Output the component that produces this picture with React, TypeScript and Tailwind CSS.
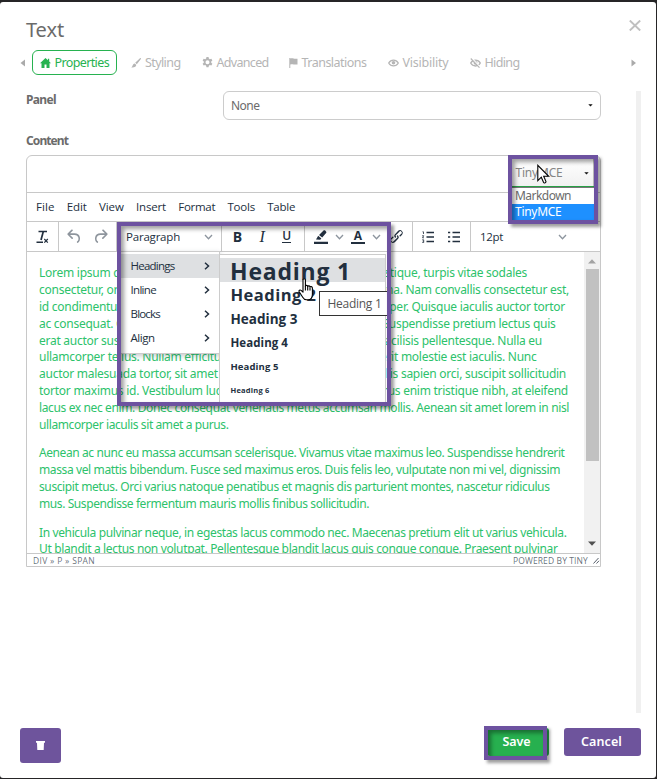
import { useLayoutEffect, useRef, type ReactNode } from "react";

/** A single-line label whose tracking is adjusted so that it spans `w` pixels. */
function Label({ w, className = "", children }: { w: number; className?: string; children: string }) {
  const ref = useRef<HTMLSpanElement>(null);
  useLayoutEffect(() => {
    const el = ref.current;
    if (!el) return;
    el.style.letterSpacing = "0px";
    const natural = el.getBoundingClientRect().width;
    el.style.letterSpacing = `${(w - natural) / children.length}px`;
  }, [w, children]);
  return (
    <span ref={ref} className={`inline-block whitespace-pre ${className}`}>
      {children}
    </span>
  );
}

type Line = { w: number; text: string } | { w: number; left: string; right: string };

const paragraphs: Line[][] = [
  [
    { w: 488, left: "Lorem ipsum dolor sit", right: "tristique, turpis vitae sodales" },
    { w: 530, left: "consectetur, orci id", right: "urna. Nam convallis consectetur est," },
    { w: 526, left: "id condimentum", right: "semper. Quisque iaculis auctor tortor" },
    { w: 516.5, left: "ac consequat. Cras", right: "Suspendisse pretium lectus quis" },
    { w: 503, left: "erat auctor suscipit", right: "facilisis pellentesque. Nulla eu" },
    { w: 497.5, left: "ullamcorper tellus. Nullam efficitur", right: "hendrerit molestie est iaculis. Nunc" },
    { w: 527, left: "auctor malesuada tortor, sit amet mi", right: "mollis sapien orci, suscipit sollicitudin" },
    { w: 529, left: "tortor maximus id. Vestibulum luctus", right: "purus enim tristique nibh, at eleifend" },
    { w: 530, text: "lacus ex nec enim. Donec consequat venenatis metus accumsan mollis. Aenean sit amet lorem in nisl" },
    { w: 189.5, text: "ullamcorper iaculis sit amet a purus." },
  ],
  [
    { w: 525.5, text: "Aenean ac nunc eu massa accumsan scelerisque. Vivamus vitae maximus leo. Suspendisse hendrerit" },
    { w: 521, text: "massa vel mattis bibendum. Fusce sed maximus eros. Duis felis leo, vulputate non mi vel, dignissim" },
    { w: 510.5, text: "suscipit metus. Orci varius natoque penatibus et magnis dis parturient montes, nascetur ridiculus" },
    { w: 330, text: "mus. Suspendisse fermentum mauris mollis finibus sollicitudin." },
  ],
  [
    { w: 527.5, text: "In vehicula pulvinar neque, in egestas lacus commodo nec. Maecenas pretium elit ut varius vehicula." },
    { w: 518.5, text: "Ut blandit a lectus non volutpat. Pellentesque blandit lacus quis congue congue. Praesent pulvinar" },
  ],
];

function TextLine({ line }: { line: Line }) {
  if ("text" in line) {
    return (
      <div className="h-[16.8px]">
        <Label w={line.w}>{line.text}</Label>
      </div>
    );
  }
  return (
    <div className="flex h-[16.8px] justify-between whitespace-pre tracking-[-0.26px]" style={{ width: line.w }}>
      <span>{line.left}</span>
      <span>{line.right}</span>
    </div>
  );
}

function Tab({ ml, w, gap, icon, children }: { ml: string; w: number; gap: string; icon: ReactNode; children: string }) {
  return (
    <div className={`flex items-center ${ml} ${gap}`}>
      {icon}
      <Label w={w}>{children}</Label>
    </div>
  );
}

function Chevron({ className = "" }: { className?: string }) {
  return (
    <svg className={className} width="9" height="6" viewBox="0 0 9 6" fill="none" stroke="#8d959e" strokeWidth="1.3">
      <path d="M1 1l3.5 3.8L8 1" />
    </svg>
  );
}

function Undo({ flip = false }: { flip?: boolean }) {
  return (
    <svg width="19" height="19" viewBox="0 0 24 24" fill="#8e959d" className={flip ? "-scale-x-100" : ""}>
      <path d="M6.4 8H12c3.7 0 6.2 2 6.8 5.1.6 2.7-.4 5.6-2.3 6.8a1 1 0 01-1-1.8c1.1-.6 1.8-2.7 1.4-4.6-.5-2.1-2.1-3.5-4.9-3.5H6.4l3.3 3.3a1 1 0 11-1.4 1.4l-5-5a1 1 0 010-1.4l5-5a1 1 0 011.4 1.4L6.4 8z" />
    </svg>
  );
}

function MenuRow({ w, active = false, children }: { w: number; active?: boolean; children: string }) {
  return (
    <div className={`flex h-6 items-center justify-between pr-[9px] pl-[9.500px] ${active ? "bg-[#dee0e2]" : ""}`}>
      <Label w={w}>{children}</Label>
      <svg width="6" height="10" viewBox="0 0 6 10" fill="none" stroke="#222f3e" strokeWidth="1.5">
        <path d="M1 1.8L4.5 5 1 8.2" />
      </svg>
    </div>
  );
}

const frame =
  "absolute border-4 border-[#6d52a0] shadow-[3px_3px_3px_rgba(0,0,0,0.38),inset_3px_3px_4px_rgba(0,0,0,0.38)]";

export default function App() {
  return (
    <div className="relative h-[779px] w-[657px] overflow-hidden bg-[#262527] pt-0.5 pr-px pb-px font-['Noto_Sans','Open_Sans',sans-serif] text-[12px] text-[#6b6b6b]">
      <div className="flex h-full flex-col rounded-[3px] bg-white">
        {/* Title */}
        <header className="flex h-12 items-start justify-between pr-[15px] pl-[26px]">
          <h1 className="pt-[14px] text-[20px] leading-[28px]">
            <Label w={38}>Text</Label>
          </h1>
          <svg className="mt-[18px]" width="12" height="11" viewBox="0 0 12 11" stroke="#c0c0c0" strokeWidth="1.9">
            <path d="M.8.5l10.4 10M11.2.5L.8 10.5" />
          </svg>
        </header>

        {/* Tabs */}
        <nav className="flex h-[25px] items-center pl-5 text-[12.5px] leading-[20px] text-[#b5b5b5]">
          <svg width="5" height="8" viewBox="0 0 5 8" fill="#aaa"><path d="M5 .5v7L.5 4z" /></svg>
          <div className="ml-[7px] flex h-[25px] w-[85px] items-center gap-[3.5px] rounded-md border border-[#27b250] pl-[7px] text-[#27b250]">
            <svg width="11" height="10" viewBox="0 0 11 10" fill="currentColor">
              <path d="M5.5 0L0 5.2h1.5V10h3V6.5h2V10h3V5.2H11L9.2 3.5V.8H7.9v1.4z" />
            </svg>
            <Label w={54.5}>Properties</Label>
          </div>
          <Tab ml="ml-[14px]" gap="gap-[4px]" w={35.5} icon={
            <svg width="10" height="10" viewBox="0 0 10 10" fill="currentColor">
              <path d="M9.8.2c.3.3.2.7-.1 1.1L5.800 6.200 4.200 4.800 8.700.4c.4-.4.8-.5 1.100-.2zM3.600 5.400l1.600 1.400c.2 1.500-1.400 2.900-4.900 2.600C1.900 8.500 1.400 5.700 3.600 5.400z" />
            </svg>
          }>Styling</Tab>
          <Tab ml="ml-[21px]" gap="gap-[4px]" w={52} icon={
            <svg width="11" height="11" viewBox="0 0 16 16" fill="currentColor">
              <path fillRule="evenodd" d="M6.500 0h3l.5 2.300 1.400.8 2.200-.7 1.500 2.600-1.700 1.600v1.700l1.700 1.600-1.500 2.600-2.200-.7-1.400.8-.5 2.400h-3l-.5-2.400-1.400-.8-2.200.7L.9 9.900l1.700-1.600V6.600L.9 5l1.500-2.600 2.200.7 1.400-.8zM8 4.600a2.900 2.900 0 100 5.800 2.900 2.900 0 000-5.800z" />
            </svg>
          }>Advanced</Tab>
          <Tab ml="ml-[20px]" gap="gap-[4px]" w={65} icon={
            <svg width="9" height="10" viewBox="0 0 9 10" fill="currentColor">
              <path d="M.3 0h1v10h-1zM1.300.6c2.400-.9 3.400.7 7.200.1v5.700c-3.500.8-4.800-1-7.200.1z" />
            </svg>
          }>Translations</Tab>
          <Tab ml="ml-[21px]" gap="gap-[4px]" w={46} icon={
            <svg width="11" height="8" viewBox="0 0 11 8" fill="none" stroke="currentColor">
              <path d="M.7 4C3 .1 8 .1 10.300 4 8 7.900 3 7.900.7 4z" strokeWidth="1.300" />
              <circle cx="5.500" cy="3.800" r="1.800" fill="currentColor" stroke="none" />
            </svg>
          }>Visibility</Tab>
          <Tab ml="ml-[21px]" gap="gap-[4px]" w={35} icon={
            <svg width="11" height="10" viewBox="0 0 11 10" fill="none" stroke="currentColor">
              <path d="M.7 5C3 1.100 8 1.100 10.300 5 8 8.900 3 8.900.7 5z" strokeWidth="1.400" />
              <circle cx="5.500" cy="4.800" r="1.900" fill="currentColor" stroke="none" />
              <path d="M1.800.3L10.300 9.500" stroke="white" strokeWidth="1.500" />
              <path d="M.8.500L9.500 9.700" strokeWidth="1.100" />
            </svg>
          }>Hiding</Tab>
          <svg className="mr-[20px] ml-auto" width="5" height="8" viewBox="0 0 5 8" fill="#aaa"><path d="M.5.500v7L5 4z" /></svg>
        </nav>

        {/* Scrolling form */}
        <div className="mt-4 flex h-[622px] justify-between pr-[15px] pl-[26px]">
          <div className="w-[575px]">
            <div className="flex h-[29px] justify-between">
              <Label w={30} className="leading-[17px] font-bold">Panel</Label>
              <div className="flex h-[29px] w-[378px] items-center justify-between rounded-md border border-[#ccc] pr-[7px] pl-[7px]">
                <Label w={28.5}>None</Label>
                <svg width="5" height="3" viewBox="0 0 5 3" fill="#111"><path d="M.3.300h4.400L2.500 2.500z" /></svg>
              </div>
            </div>
            <div className="mt-3 h-[23px] leading-[17px] font-bold">
              <Label w={42}>Content</Label>
            </div>

            {/* Editor */}
            <div className="h-[412px] overflow-hidden rounded-t-md border border-[#c8c8c8] font-['Open_Sans','Noto_Sans',sans-serif] text-[#222f3e]">
              <div className="h-9" />
              <div className="flex h-[30px] items-center gap-[12.2px] border-t border-b border-[#c8c8c8] pl-[9px] text-[11.500px]">
                <Label w={18.500}>File</Label>
                <Label w={20}>Edit</Label>
                <Label w={25}>View</Label>
                <Label w={30}>Insert</Label>
                <Label w={37}>Format</Label>
                <Label w={27.500}>Tools</Label>
                <Label w={28}>Table</Label>
              </div>
              <div className="flex h-[30px] items-stretch border-b border-[#c8c8c8]">
                <div className="flex w-8 items-center justify-center border-r border-[#c8c8c8] pr-px">
                  <svg width="13" height="14" viewBox="0 0 13 14" fill="none" stroke="#222f3e">
                    <path d="M2.500 1.500H11" strokeWidth="1.700" />
                    <path d="M7.300 1.500L5 10" strokeWidth="1.700" />
                    <path d="M.5 12.300H7" strokeWidth="1.500" />
                    <path d="M8.300 9l3.500 3.600M11.800 9l-3.500 3.600" strokeWidth="1.200" />
                  </svg>
                </div>
                <div className="flex w-[58px] items-center justify-center gap-[7px] border-r border-[#c8c8c8] pr-px">
                  <Undo />
                  <Undo flip />
                </div>
                <div className="flex w-[105px] items-center justify-between border-r border-[#c8c8c8] pr-2 pl-[9px] text-[11.500px]">
                  <Label w={54}>Paragraph</Label>
                  <Chevron />
                </div>
                <div className="flex w-[83px] items-center justify-around border-r border-[#c8c8c8] pr-1 pl-[2px] text-[14px] leading-none">
                  <b>B</b>
                  <i className="font-['Liberation_Serif',serif] text-[16px]">I</i>
                  <span className="h-[13px] border-b-[1.500px] border-[#222f3e] text-[12px] leading-[11px] font-semibold">U</span>
                </div>
                <div className="flex w-[108px] items-center border-r border-[#c8c8c8] pl-[9px]">
                  <svg width="14" height="14" viewBox="0 0 14 14" fill="#222f3e">
                    <path d="M0 11.800h14V14H0zM2 9.500l2.200-3.700 3.200 2.700-1.200 1.300zM5 5L9.300.7c.6-.6 1.300-.6 1.900-.1l.8.800c.5.600.5 1.300-.1 1.900L8.200 7.600z" />
                  </svg>
                  <Chevron className="ml-[7px]" />
                  <span className="ml-[7px] flex h-[14px] w-[14px] justify-center border-b-2 border-[#222f3e] text-[12px] leading-[12px] font-bold">A</span>
                  <Chevron className="ml-[7px]" />
                  <svg className="ml-[7px] h-[17px] w-[17px]" viewBox="0 0 24 24" fill="#222f3e">
                    <path d="M6.200 12.300a1 1 0 011.400 1.400l-2.100 2a2 2 0 102.700 2.800l4.800-4.800a1 1 0 000-1.400 1 1 0 111.400-1.300 2.900 2.900 0 010 4L9.600 20a3.900 3.900 0 01-5.500-5.500l2-2zm11.600-.6a1 1 0 01-1.400-1.400l2-2a2 2 0 10-2.600-2.800L11 10.300a1 1 0 000 1.400A1 1 0 119.600 13a2.900 2.900 0 010-4L14.400 4a3.900 3.900 0 015.500 5.500l-2 2z" />
                  </svg>
                </div>
                <div className="flex w-[58px] items-center gap-[14px] border-r border-[#c8c8c8] pl-[9px]">
                  <svg width="12" height="12" viewBox="0 0 12 12" stroke="#222f3e" fill="none">
                    <path d="M4.500 1.500H12M4.500 6H12M4.500 10.500H12" strokeWidth="1.600" />
                    <path d="M.5.800h1V3M.2 4.700h1.500L.5 6.800h1.500M.2 8.800h1.500v2.800H.2M.7 10.200h1" strokeWidth=".8" />
                  </svg>
                  <svg width="12" height="12" viewBox="0 0 12 12" stroke="#222f3e" fill="none">
                    <path d="M4.500 1.500H12M4.500 6H12M4.500 10.500H12M0 1.500h2.200M0 6h2.200M0 10.500h2.200" strokeWidth="1.600" />
                  </svg>
                </div>
                <div className="flex w-[96px] items-center justify-between pl-[9px] text-[11.500px]">
                  <Label w={23}>12pt</Label>
                  <Chevron />
                </div>
              </div>

              <div className="flex h-[301px] justify-between">
                <div className="flex flex-col gap-3 overflow-hidden pt-[13.400px] pl-3 font-['Noto_Sans','Open_Sans',sans-serif] text-[12px] leading-[16.800px] text-[#2dc26b]">
                  {paragraphs.map((lines, i) => (
                    <div key={i} className="shrink-0">
                      {lines.map((line, j) => (
                        <TextLine key={j} line={line} />
                      ))}
                    </div>
                  ))}
                </div>
                <div className="flex w-4 flex-col items-center bg-[#f1f1f1]">
                  <svg className="mt-[7px]" width="8" height="5" viewBox="0 0 8 5" fill="#a3a3a3"><path d="M0 4.500h8L4 .3z" /></svg>
                  <div className="mt-[5px] h-[192px] w-[13px] bg-[#c1c1c1]" />
                  <svg className="mt-auto mb-[7px]" width="8" height="5" viewBox="0 0 8 5" fill="#505050"><path d="M0 .5h8L4 4.700z" /></svg>
                </div>
              </div>

              <div className="flex h-[13px] items-center border-t border-[#c8c8c8] pt-px pl-[6px] text-[8.500px] leading-[12px] text-[#222f3e]/70">
                <Label w={62}>DIV » P » SPAN</Label>
                <Label w={75} className="ml-auto">POWERED BY TINY</Label>
                <svg className="ml-1" width="8" height="7" viewBox="0 0 8 7" stroke="#59616c" strokeWidth="1"><path d="M1.500 6.500l5-5.500M4.500 6.500L7 3.800" /></svg>
              </div>
            </div>
          </div>
          <div className="w-[5px] bg-[#f0f0f0]" />
        </div>

        {/* Footer */}
        <footer className="mt-[15px] flex items-start pr-[15px] pl-5 text-[12.500px] leading-none font-semibold text-white">
          <div className="flex h-[35px] w-[41px] items-center justify-center rounded-[3px] bg-[#6e549c]">
            <svg width="9" height="9" viewBox="0 0 9 9" fill="white"><path d="M0 0h9v1.700H8L7.700 9H1.300L1 1.700H0z" /></svg>
          </div>
          <div className="ml-auto flex h-7 w-[62px] items-center justify-center rounded-[3px] bg-[#27b04f] pr-[3px]">
            <Label w={28}>Save</Label>
          </div>
          <div className="ml-[15px] flex h-7 w-[77px] items-center justify-center rounded-[3px] bg-[#6e549c] pr-[2px]">
            <Label w={41}>Cancel</Label>
          </div>
        </footer>
      </div>

      {/* Block format menus */}
      <div className="absolute top-[226px] left-[121px] h-[176px] w-[266px] overflow-hidden font-['Open_Sans','Noto_Sans',sans-serif] text-[11.500px] leading-[16px] text-[#222f3e]">
        <div className="absolute top-[25px] left-0 h-[103px] w-[99px] border-t border-r border-b border-[#ccc] bg-white pt-[2px] shadow-[0_2px_5px_rgba(34,47,62,0.25)]">
          <MenuRow w={44} active>Headings</MenuRow>
          <MenuRow w={25.500}>Inline</MenuRow>
          <MenuRow w={29.500}>Blocks</MenuRow>
          <MenuRow w={24}>Align</MenuRow>
        </div>
        <div className="absolute top-[28px] left-[98px] flex h-[170px] w-[167px] flex-col border border-[#ccc] bg-white pt-[3px] font-bold">
          <div className="flex h-6 items-center bg-[#dee0e2] pt-[2px] pl-[10px] text-[23px]"><Label w={121}>Heading 1</Label></div>
          <div className="flex h-6 items-center pt-px pl-[10.500px] text-[16.500px]"><Label w={86}>Heading 2</Label></div>
          <div className="flex h-6 items-center pt-px pl-[10.500px] text-[13.500px]"><Label w={67}>Heading 3</Label></div>
          <div className="flex h-6 items-center pt-px pl-[10.500px] text-[11.500px]"><Label w={57.500}>Heading 4</Label></div>
          <div className="flex h-6 items-center pt-px pl-[10.500px] text-[9.500px]"><Label w={48}>Heading 5</Label></div>
          <div className="flex h-6 items-center pl-[10.500px] text-[7.500px]"><Label w={39}>Heading 6</Label></div>
        </div>
        <div className="absolute top-[65px] left-[198px] flex h-[25px] w-[72px] items-center border border-[#333] bg-white pl-[7.500px] text-[12px] text-[#555]">
          <Label w={54}>Heading 1</Label>
        </div>
        <svg className="absolute top-[52px] left-[177px]" width="17" height="23" viewBox="0 0 17 23" fill="white" stroke="black" strokeWidth="1.100" strokeLinejoin="round">
          <path d="M5 1.700c0-1.300 2.400-1.300 2.400 0v6.500c.1-1.200 2.300-1.100 2.300.3.300-1 2.300-.8 2.300.6.4-.9 2.400-.6 2.400.9v6.200c0 3.500-1.700 5.600-4.400 5.600H8.600c-1.900 0-3-1-3.900-2.600L1.200 13.700c-.7-1.300.8-2.300 1.900-1.300L5 14.200z" />
          <path d="M7.400 8v4.500M9.700 8.500v4M12 9.500v3" fill="none" />
        </svg>
      </div>
      <div className={`${frame} top-[222px] left-[117px] h-[184px] w-[274px]`} />

      {/* Editor type select */}
      <div className="absolute top-[159px] left-[512px] h-[61px] w-[82px] bg-white text-[12px] leading-[16px]">
        <div className="flex h-[27px] items-center justify-between border-r border-[#bbb] bg-linear-to-b from-white to-[#f1f1f1] pt-px pr-[4px] pl-[3.500px] text-[#858585]">
          <Label w={47}>TinyMCE</Label>
          <svg width="5" height="3" viewBox="0 0 5 3" fill="#111"><path d="M.3.300h4.400L2.500 2.500z" /></svg>
        </div>
        <div className="h-[2px] border-b border-[#777] bg-[#27a045]" />
        <div className="h-4 pl-[3px]"><Label w={56}>Markdown</Label></div>
        <div className="h-4 bg-[#1e90ff] pl-[3px] text-white"><Label w={46.500}>TinyMCE</Label></div>
        <svg className="absolute top-[5px] left-[25px]" width="13" height="20" viewBox="0 0 13 20" fill="white" stroke="black" strokeWidth="1.100">
          <path d="M.8 1.300v15.300l3.500-3.400 2.300 5.300c.6 1 2.800.1 2.300-1.100L6.700 12.300h5z" />
        </svg>
      </div>
      <div className={`${frame} top-[155px] left-[508px] h-[69px] w-[90px]`} />

      <div className={`${frame} top-[726px] left-[484px] h-[34px] w-[63px]`} />
    </div>
  );
}
